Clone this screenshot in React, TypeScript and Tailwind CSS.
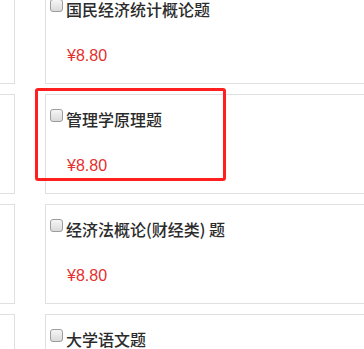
const courses = [
  "国民经济统计概论题",
  "管理学原理题",
  "经济法概论(财经类) 题",
  "大学语文题",
];

function Checkbox() {
  return (
    <span className="block h-[13px] w-[13px] shrink-0 rounded-[3px] border border-[#9c9c9c] bg-linear-to-b from-[#f6f6f6] to-[#dadada]" />
  );
}

function CourseCard({ title }: { title: string }) {
  return (
    <div className="h-[100px] border border-[#e0e0e0] bg-white pt-[14px] pl-[4px]">
      <div className="flex items-start">
        <Checkbox />
        <span className="ml-[3px] text-[16px] leading-[20px] font-medium whitespace-nowrap text-[#2b2b2b]">
          {title}
        </span>
      </div>
      <div className="mt-[27px] pl-[17px] font-['Liberation_Sans',Arial,sans-serif] text-[16px] leading-[20px] text-[#e4302e]">
        ¥8.80
      </div>
    </div>
  );
}

export default function App() {
  return (
    <div
      className="relative h-[349px] w-[364px] overflow-hidden bg-white"
      style={{ fontFamily: '"Noto Sans CJK SC", "Liberation Sans", sans-serif' }}
    >
      <div className="mt-[-16px] flex">
        <div className="flex w-[15px] shrink-0 flex-col gap-[10px]">
          {courses.map((c) => (
            <div key={c} className="h-[100px] border-y border-r border-[#e0e0e0]" />
          ))}
        </div>
        <div className="ml-[30px] flex w-[400px] shrink-0 flex-col gap-[10px]">
          {courses.map((c) => (
            <CourseCard key={c} title={c} />
          ))}
        </div>
      </div>
      <div className="absolute top-[88px] left-[35px] h-[93px] w-[191px] rounded-[3px] border-[3px] border-[#ff1f1f]" />
    </div>
  );
}
